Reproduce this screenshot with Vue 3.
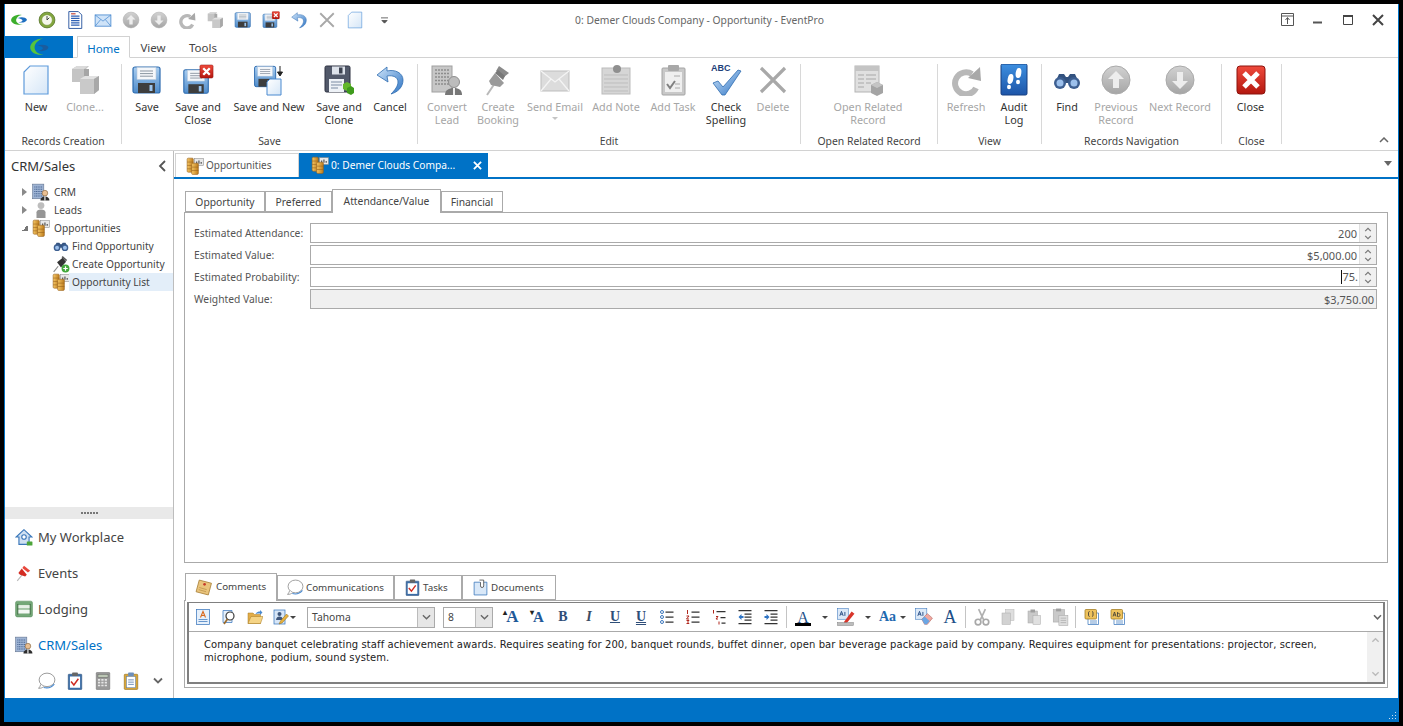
<template>
  <div class="win">
    <svg class="defs" width="0" height="0" aria-hidden="true">
      <defs>
        <linearGradient id="gPage" x1="0" y1="0" x2="1" y2="1"><stop offset="0" stop-color="#fff"/><stop offset="1" stop-color="#d5e6f7"/></linearGradient>
        <linearGradient id="gFloppy" x1="0" y1="0" x2="0" y2="1"><stop offset="0" stop-color="#a9cdf0"/><stop offset="1" stop-color="#4f8ccb"/></linearGradient>
        <linearGradient id="gGrey" x1="0" y1="0" x2="0" y2="1"><stop offset="0" stop-color="#d2d2d2"/><stop offset="1" stop-color="#a5a5a5"/></linearGradient>
        <linearGradient id="gRed" x1="0" y1="0" x2="0" y2="1"><stop offset="0" stop-color="#ef4a3c"/><stop offset="1" stop-color="#b3170f"/></linearGradient>
        <linearGradient id="gBlue" x1="0" y1="0" x2="0" y2="1"><stop offset="0" stop-color="#3d8fe0"/><stop offset="1" stop-color="#1d55a8"/></linearGradient>
        <linearGradient id="gGold" x1="0" y1="0" x2="1" y2="0"><stop offset="0" stop-color="#f6c765"/><stop offset="1" stop-color="#bb7a1c"/></linearGradient>
        <linearGradient id="gArrow" x1="0" y1="0" x2="1" y2="1"><stop offset="0" stop-color="#cfe5fa"/><stop offset="1" stop-color="#2e74c4"/></linearGradient>

        <symbol id="logo" viewBox="0 0 32 32">
          <path d="M21 7C9 6 2 11 2 17c1 6 12 9 21 7-8 0-13-4-12-9 1-4 5-7 10-8Z" fill="#3cae2c"/>
          <path d="M13 13c6-3 15-2 17 2 0 4-8 7-15 5 5 0 8-2 7-4-2-2-5-3-9-3Z" fill="#1e6fc0"/>
        </symbol>
        <symbol id="logoApp" viewBox="0 0 32 32">
          <path d="M23 2C10 3 1 10 2 18c1 7 11 12 21 10-9-1-15-6-14-13 1-6 7-11 14-13Z" fill="#56c43c"/>
          <path d="M13 14c6-3 15-2 18 2 0 5-9 8-16 6 5-1 8-3 7-5-2-2-5-3-9-3Z" fill="#1a5c9e"/>
        </symbol>
        <symbol id="clock" viewBox="0 0 32 32">
          <circle cx="16" cy="16" r="14" fill="#84a83e" stroke="#56762a" stroke-width="1.500"/>
          <circle cx="16" cy="16" r="9.500" fill="#f5f7ea" stroke="#6e8f33"/>
          <path d="M16 9v7l4-4" fill="none" stroke="#333" stroke-width="1.600"/>
        </symbol>
        <symbol id="doclist" viewBox="0 0 32 32">
          <path d="M5 1h17l6 6v24H5Z" fill="#fff" stroke="#23509c" stroke-width="1.600"/>
          <path d="M9 9h15M9 13h15M9 17h15M9 21h15M9 25h15" stroke="#2d5fb4" stroke-width="2"/>
          <path d="M9 5h8" stroke="#c03a2b" stroke-width="2"/>
        </symbol>
        <symbol id="mail" viewBox="0 0 32 32">
          <rect x="2" y="7" width="28" height="20" fill="#cfe3f8" stroke="#4a8ad0" stroke-width="1.500"/>
          <path d="M2 7l14 11L30 7M2 27l10-12M30 27 20 15" fill="none" stroke="#4a8ad0" stroke-width="1.300"/>
        </symbol>
        <symbol id="mailg" viewBox="0 0 32 32">
          <rect x="2" y="7" width="28" height="20" fill="#dcdcdc" stroke="#bdbdbd"/>
          <path d="M2 7l14 11L30 7M2 27l10-12M30 27 20 15" fill="none" stroke="#f4f4f4" stroke-width="1.300"/>
        </symbol>
        <symbol id="up" viewBox="0 0 32 32">
          <circle cx="16" cy="16" r="14" fill="url(#gGrey)" stroke="#aaa"/>
          <path d="M16 7l8 8h-5v9h-6v-9H8Z" fill="#ededed"/>
        </symbol>
        <symbol id="down" viewBox="0 0 32 32">
          <circle cx="16" cy="16" r="14" fill="url(#gGrey)" stroke="#aaa"/>
          <path d="M16 25l-8-8h5V8h6v9h5Z" fill="#ededed"/>
        </symbol>
        <symbol id="refresh" viewBox="0 0 32 32">
          <path d="M22 10A11 11 0 1 0 26 24" fill="none" stroke="#b8b8b8" stroke-width="6"/>
          <path d="M18 14l13 3-1-14Z" fill="#a8a8a8"/>
        </symbol>
        <symbol id="clone" viewBox="0 0 32 32">
          <path d="M3 5l5-3h12l-3 3v13H3Z" fill="#c4c4c4"/><path d="M3 5l5-3h11l-4 3Z" fill="#dadada"/><path d="M15 5h5v12l-5 3Z" fill="#a6a6a6"/>
          <path d="M11 15l5-3h14v14l-5 4H11Z" fill="#c9c9c9"/><path d="M11 15l5-3h14l-5 3Z" fill="#e2e2e2"/><path d="M25 15l5-3v14l-5 4Z" fill="#a8a8a8"/>
        </symbol>
        <symbol id="save" viewBox="0 0 32 32">
          <rect x="2" y="3" width="27" height="26" rx="2" fill="url(#gFloppy)" stroke="#2e6cb0" stroke-width="1.200"/>
          <rect x="6" y="3.500" width="19" height="12" fill="#f5f7fa" stroke="#b8c8da" stroke-width=".6"/>
          <path d="M9 7h13M9 9.600h13M9 12.200h13" stroke="#8b95a1" stroke-width="1"/>
          <rect x="7" y="19" width="17" height="10" fill="#3d3d3d"/>
          <rect x="18.500" y="21" width="3" height="6" fill="#9cc4ec"/>
        </symbol>
        <symbol id="redx" viewBox="0 0 32 32">
          <rect x="2" y="2" width="28" height="28" rx="3" fill="url(#gRed)" stroke="#8c120c"/>
          <path d="M9 9l14 14M23 9 9 23" stroke="#fff" stroke-width="5"/>
        </symbol>
        <symbol id="saveclose" viewBox="0 0 32 32">
          <svg x="0" y="3" width="29" height="29" viewBox="0 0 32 32"><use href="#save"/></svg>
          <svg x="17" y="0" width="15" height="15" viewBox="0 0 32 32"><use href="#redx"/></svg>
        </symbol>
        <symbol id="savenew" viewBox="0 0 32 32">
          <svg x="0" y="0" width="25" height="25" viewBox="0 0 32 32"><use href="#save"/></svg>
          <path d="M17 15h5l6 0v16H14V18Z" fill="url(#gPage)" stroke="#4a8ad0" stroke-width="1"/>
          <path d="M27 2v9M24.500 8l2.500 4 2.500-4Z" fill="#222" stroke="#222" stroke-width="1"/>
        </symbol>
        <symbol id="saveclone" viewBox="0 0 32 32">
          <rect x="2" y="2" width="25" height="26" rx="1.500" fill="#52596a" stroke="#2c3140"/>
          <rect x="9" y="2.500" width="13" height="8" fill="#dde2ea"/><rect x="16" y="3.500" width="3.500" height="6" fill="#3c4250"/>
          <rect x="6" y="15" width="15" height="13" fill="#eef2f7"/><path d="M8 18h11M8 21h11M8 24h7" stroke="#7a8ba3"/>
          <path d="M20 20l4-2 4 2v5l-4 2-4-2Z" fill="#63b82b"/><path d="M24 24l4-2 3 2v5l-3 2-4-2Z" fill="#3f9b1c"/>
        </symbol>
        <symbol id="undo" viewBox="0 0 32 32">
          <path d="M13 3 3 11l11 7-1-6c6-1 11 1 11 6 0 4-3 8-7 12 7-2 12-7 12-14C29 9 21 5 13 7Z" fill="url(#gArrow)" stroke="#2e6cb0" stroke-width=".8"/>
        </symbol>
        <symbol id="xg" viewBox="0 0 32 32"><path d="M4 4l24 24M28 4 4 28" stroke="#a8a8a8" stroke-width="3.200"/></symbol>
        <symbol id="page" viewBox="0 0 32 32">
          <path d="M10 2h18v28H4V8Z" fill="url(#gPage)" stroke="#5f9bdb" stroke-width="1.200"/>
        </symbol>
        <symbol id="lead" viewBox="0 0 32 32">
          <rect x="1" y="2" width="20" height="26" fill="#c7c7c7" stroke="#a0a0a0"/>
          <path d="M4 6h14M4 9.500h14M4 13h14M4 16.500h14M4 20h14" stroke="#8d8d8d" stroke-width="1.600" stroke-dasharray="2 1"/>
          <circle cx="23" cy="18" r="5.500" fill="#bcbcbc" stroke="#8f8f8f"/>
          <path d="M14 31c0-5 4-7 9-7s8 2 8 7Z" fill="#777"/><path d="M22 24h2l0 7h-2Z" fill="#eee"/>
        </symbol>
        <symbol id="pin" viewBox="0 0 32 32">
          <path d="M5 31l8-12" stroke="#b9b9b9" stroke-width="2"/>
          <path d="M13 9l9 10-4 4-9-2-2-4Z" fill="#9a9a9a"/><path d="M17 2l10 7-5 4-8-6Z" fill="#8a8a8a"/><path d="M13 9l8 7 2-4-7-6Z" fill="#787878"/>
        </symbol>
        <symbol id="note" viewBox="0 0 32 32">
          <rect x="2" y="4" width="28" height="26" fill="#d6d6d6" stroke="#bbb"/>
          <path d="M4 11h24M4 15h24M4 19h24M4 23h24M4 27h24" stroke="#bdbdbd"/>
          <circle cx="17" cy="5" r="4" fill="#8f8f8f"/>
        </symbol>
        <symbol id="task" viewBox="0 0 32 32">
          <rect x="5" y="4" width="23" height="27" rx="1" fill="#c8c8c8" stroke="#a4a4a4"/>
          <rect x="8" y="8" width="17" height="20" fill="#efefef"/>
          <rect x="11" y="1" width="11" height="6" rx="1" fill="#a8a8a8"/>
          <path d="M10 20l3 4 5-7" fill="none" stroke="#808080" stroke-width="2"/><path d="M17 12h6M18 20h5M18 24h5" stroke="#aaa"/>
        </symbol>
        <symbol id="abc" viewBox="0 0 32 32">
          <path d="M3 19l5-2 5 6L28 6l3 1-16 24h-3Z" fill="url(#gArrow)" stroke="#2e6cb0" stroke-width=".8"/>
        </symbol>
        <symbol id="related" viewBox="0 0 32 32">
          <rect x="3" y="2" width="24" height="26" fill="#e0e0e0" stroke="#b4b4b4"/>
          <rect x="3" y="2" width="24" height="5" fill="#c4c4c4"/>
          <path d="M6 11h6M14 11h10M6 15h6M14 15h10M6 19h6M14 19h5M6 23h6" stroke="#a8a8a8"/>
          <path d="M19 21l6-3 6 3v8l-6 3-6-3Z" fill="#a4a4a4"/><path d="M19 21l6 3 6-3-6-3Z" fill="#c4c4c4"/>
        </symbol>
        <symbol id="audit" viewBox="0 0 32 32">
          <rect x="3" y="0" width="26" height="31" rx="1.500" fill="url(#gBlue)" stroke="#173f80"/>
          <ellipse cx="12.500" cy="15" rx="2.800" ry="5" fill="#fff" transform="rotate(12 12.500 15)"/>
          <ellipse cx="11" cy="23" rx="2" ry="2.200" fill="#fff"/>
          <ellipse cx="20.500" cy="9" rx="2.800" ry="5" fill="#fff" transform="rotate(8 20.500 9)"/>
          <ellipse cx="20" cy="18" rx="2" ry="2.200" fill="#fff"/>
        </symbol>
        <symbol id="find" viewBox="0 0 32 32">
          <path d="M8 10h5l2 3h2l2-3h5l4 9H4Z" fill="#33527f"/>
          <circle cx="9" cy="19" r="6" fill="#3d5f91"/><circle cx="23" cy="19" r="6" fill="#3d5f91"/>
          <circle cx="9" cy="19" r="3.500" fill="#9cc0ec"/><circle cx="23" cy="19" r="3.500" fill="#9cc0ec"/>
        </symbol>
        <symbol id="opp" viewBox="0 0 32 32">
          <rect x="15" y="3" width="16" height="12" fill="#e8e8e8" stroke="#8a8a8a"/>
          <path d="M19 12V8M23 12V6M27 12V9" stroke="#4a4a4a" stroke-width="2"/>
          <rect x="2" y="2" width="11" height="25" rx="2" fill="url(#gGold)" stroke="#96601a"/>
          <rect x="10" y="11" width="12" height="20" rx="2" fill="url(#gGold)" stroke="#96601a"/>
          <path d="M2 9h11M2 15h8M2 21h8M10 18h12M10 24h12" stroke="#96601a"/>
        </symbol>
        <symbol id="person" viewBox="0 0 32 32">
          <circle cx="16" cy="8" r="6" fill="#bdbdbd"/><path d="M8 30V20c0-3 3-5 8-5s8 2 8 5v10Z" fill="#969696"/>
        </symbol>
        <symbol id="crm" viewBox="0 0 32 32">
          <rect x="1" y="2" width="20" height="26" fill="#9fb4d4" stroke="#5e708c"/>
          <path d="M4 7h14M4 11h14M4 15h14M4 19h14M4 23h14" stroke="#4e6a96" stroke-width="1.800" stroke-dasharray="2 1"/>
          <circle cx="23" cy="18" r="5" fill="#e9bf92" stroke="#7a5a34"/>
          <path d="M15 31c0-4 3-7 8-7s8 3 8 7Z" fill="#2d2d2d"/><path d="M22 24h2v7h-2Z" fill="#fff"/>
        </symbol>
        <symbol id="create" viewBox="0 0 32 32">
          <path d="M3 30l8-10" stroke="#888" stroke-width="2"/>
          <path d="M9 13l10-8 6 7-9 10Z" fill="#343434"/><path d="M18 3l8 7" stroke="#555" stroke-width="3"/>
          <circle cx="24" cy="24" r="7" fill="#42a83a"/><path d="M24 20v8M20 24h8" stroke="#fff" stroke-width="2.200"/>
        </symbol>
        <symbol id="home" viewBox="0 0 32 32">
          <path d="M16 3 2 16h5v13h18V16h5Z" fill="#cfe0f2" stroke="#3a77ba" stroke-width="2"/>
          <circle cx="16" cy="16" r="4" fill="#fff" stroke="#3a77ba" stroke-width="2"/>
          <rect x="21" y="24" width="10" height="7" rx="1" fill="#4da53a"/>
        </symbol>
        <symbol id="pinred" viewBox="0 0 32 32">
          <path d="M4 30l9-11" stroke="#bbb" stroke-width="2"/>
          <path d="M12 8l9 11-3 3-9-3-3-3Z" fill="#d32c22"/><path d="M16 3l11 9-4 3-10-8Z" fill="#e8473c"/>
        </symbol>
        <symbol id="bed" viewBox="0 0 32 32">
          <rect x="1" y="2" width="30" height="28" rx="3" fill="#74a878" stroke="#5b8e60"/>
          <rect x="5" y="9" width="22" height="6" fill="#e6f0e6"/><rect x="5" y="17" width="22" height="7" fill="#f3f8f3"/>
          <path d="M5 7v19M27 7v19" stroke="#35613a" stroke-width="1.600"/>
        </symbol>
        <symbol id="bubble" viewBox="0 0 32 32">
          <ellipse cx="16" cy="14" rx="14" ry="12" fill="#fff" stroke="#8a8a8a" stroke-width="1.500"/>
          <path d="M5 22c-1 3-2 5-4 7 4 0 7-1 9-3" fill="#fff" stroke="#8a8a8a" stroke-width="1.500"/>
          <path d="M10 27.500c7 2 14 0 19-6" fill="none" stroke="#4a8ad0" stroke-width="2"/>
        </symbol>
        <symbol id="clipred" viewBox="0 0 32 32">
          <rect x="4" y="4" width="24" height="27" rx="1" fill="#3d6fa9" stroke="#284c78"/>
          <rect x="7" y="8" width="18" height="20" fill="#fff"/>
          <rect x="11" y="1" width="10" height="6" rx="1" fill="#666"/>
          <path d="M9 17l5 6 8-11" fill="none" stroke="#cf2a20" stroke-width="2.600"/>
        </symbol>
        <symbol id="calc" viewBox="0 0 32 32">
          <rect x="4" y="1" width="24" height="30" rx="1" fill="#9a9a9a" stroke="#6e6e6e"/>
          <rect x="7" y="4" width="18" height="6" fill="#bcc7b5" stroke="#666"/>
          <path d="M7 14h18M7 19h18M7 24h18" stroke="#e6e6e6" stroke-width="3" stroke-dasharray="4 2"/>
        </symbol>
        <symbol id="clipgold" viewBox="0 0 32 32">
          <rect x="4" y="4" width="24" height="27" rx="1.500" fill="#d9a637" stroke="#8c6712"/>
          <rect x="8" y="8" width="16" height="20" fill="#fff" stroke="#5a7fb0"/>
          <rect x="11" y="1" width="10" height="6" rx="1" fill="#6d8fbb"/>
          <path d="M11 14h10M11 18h10M11 22h10" stroke="#5a7fb0" stroke-width="1.500"/>
        </symbol>
        <symbol id="comment" viewBox="0 0 32 32">
          <path d="M8 2 31 8l-6 22L2 24Z" fill="#eac47c" stroke="#a57c33" stroke-width="1.500"/>
          <circle cx="18" cy="10" r="2.500" fill="#c63a2c"/><path d="M8 16l14 4M7 20l14 4" stroke="#a57c33"/>
        </symbol>
        <symbol id="docclip" viewBox="0 0 32 32">
          <path d="M4 6h24v24H4Z" fill="#d9e8f8" stroke="#3c78bd" stroke-width="1.500"/>
          <path d="M14 2h8v11a3 3 0 0 1-6 0V6" fill="#fff" stroke="#444" stroke-width="1.500"/>
        </symbol>
        <symbol id="t-a" viewBox="0 0 32 32">
          <rect x="3" y="1" width="26" height="30" fill="#e6f0fb" stroke="#3c78bd" stroke-width="1.500"/>
          <path d="M11 17 16 5l5 12M13 13h6" fill="none" stroke="#d9681c" stroke-width="2.200"/><path d="M7 21h18M7 25h18" stroke="#3c78bd" stroke-width="1.500"/>
        </symbol>
        <symbol id="t-find" viewBox="0 0 32 32">
          <path d="M4 3h18v24H4Z" fill="#e6f0fb" stroke="#3c78bd" stroke-width="1.500"/>
          <circle cx="18" cy="14" r="8" fill="#fff" stroke="#3b3b3b" stroke-width="2.400"/><path d="M13 20 6 30" stroke="#9a6a2c" stroke-width="3.500"/>
        </symbol>
        <symbol id="t-open" viewBox="0 0 32 32">
          <path d="M2 8h10l3 3h12v18H2Z" fill="#e2ad48" stroke="#a67a24"/>
          <path d="M2 29 8 15h24l-5 14Z" fill="#f5d486" stroke="#a67a24"/>
          <path d="M17 10c2-4 6-5 9-5V2l5 5-5 5V9c-3 0-6 0-9 1Z" fill="#4a8ad0"/>
        </symbol>
        <symbol id="t-sig" viewBox="0 0 32 32">
          <rect x="2" y="2" width="22" height="28" fill="#d7e6f7" stroke="#3c78bd" stroke-width="1.500"/>
          <circle cx="13" cy="10" r="4" fill="#3f577c"/><path d="M6 22c0-5 4-7 7-7s7 2 7 7Z" fill="#3f577c"/>
          <path d="M12 30l3-6L27 10l4 4-13 14Z" fill="#e9b33f" stroke="#8c6712"/>
        </symbol>
        <symbol id="t-bul" viewBox="0 0 32 32"><g fill="none" stroke="#3c78bd" stroke-width="2"><circle cx="6" cy="6" r="3"/><circle cx="6" cy="16" r="3"/><circle cx="6" cy="26" r="3"/></g><path d="M13 6h16M13 16h16M13 26h16" stroke="#333" stroke-width="2.500"/></symbol>
        <symbol id="t-num" viewBox="0 0 32 32"><path d="M5 2v8M3 14h5l-5 6h5M3 23h5l-3 3 3 3H3" fill="none" stroke="#b0271d" stroke-width="2"/><path d="M13 6h16M13 16h16M13 26h16" stroke="#333" stroke-width="2.500"/></symbol>
        <symbol id="t-multi" viewBox="0 0 32 32"><path d="M5 2v7M10 15h4l-4 5h4M16 25v6" fill="none" stroke="#b0271d" stroke-width="2"/><path d="M11 5h18M19 17h10M21 28h8" stroke="#333" stroke-width="2.500"/></symbol>
        <symbol id="t-out" viewBox="0 0 32 32"><path d="M3 3h26M15 10h14M15 16h14M15 22h14M3 29h26" stroke="#333" stroke-width="2.500"/><path d="M3 16l6-6v4h4v4H9v4Z" fill="#2e74c4"/></symbol>
        <symbol id="t-in" viewBox="0 0 32 32"><path d="M3 3h26M15 10h14M15 16h14M15 22h14M3 29h26" stroke="#333" stroke-width="2.500"/><path d="M13 16l-6-6v4H3v4h4v4Z" fill="#2e74c4"/></symbol>
        <symbol id="t-high" viewBox="0 0 32 32">
          <rect x="1" y="1" width="19" height="19" fill="#dce9f8" stroke="#3c78bd"/>
          <path d="M5 14l3-8 3 8M6 11h4M14 7v7" fill="none" stroke="#2a4f85" stroke-width="1.700"/>
          <path d="M13 24 26 6l5 4-14 17-5 1Z" fill="#d8352a"/><rect x="1" y="26" width="28" height="5" fill="#bcbcbc" stroke="#888"/>
        </symbol>
        <symbol id="t-clear" viewBox="0 0 32 32">
          <rect x="1" y="1" width="20" height="19" fill="#dce9f8" stroke="#3c78bd"/>
          <path d="M5 14l3-8 3 8M6 11h4M14 7v7" fill="none" stroke="#2a4f85" stroke-width="1.700"/>
          <path d="M12 20l10-10 9 8-9 11h-5Z" fill="#f0a7a0" stroke="#b0605a"/><path d="M12 20l5-5 9 8-5 6h-4Z" fill="#6aa6e4"/>
        </symbol>
        <symbol id="t-cut" viewBox="0 0 32 32">
          <path d="M10 2l9 19M22 2 13 21" stroke="#b0b0b0" stroke-width="3"/>
          <circle cx="9" cy="25" r="5" fill="none" stroke="#a8a8a8" stroke-width="3"/><circle cx="23" cy="25" r="5" fill="none" stroke="#a8a8a8" stroke-width="3"/>
        </symbol>
        <symbol id="t-copy" viewBox="0 0 32 32"><rect x="11" y="1" width="17" height="22" fill="#dedede" stroke="#b5b5b5"/><rect x="4" y="8" width="17" height="23" fill="#d2d2d2" stroke="#adadad"/></symbol>
        <symbol id="t-paste" viewBox="0 0 32 32"><rect x="4" y="4" width="19" height="24" fill="#c9c9c9" stroke="#a8a8a8"/><rect x="9" y="1" width="9" height="6" fill="#9f9f9f"/><rect x="14" y="13" width="15" height="18" fill="#e0e0e0" stroke="#ababab"/></symbol>
        <symbol id="t-spec" viewBox="0 0 32 32"><rect x="4" y="3" width="20" height="22" fill="#c9c9c9" stroke="#a8a8a8"/><rect x="9" y="1" width="9" height="5" fill="#9f9f9f"/><rect x="14" y="13" width="16" height="18" fill="#dedede" stroke="#a8a8a8"/><path d="M17 18h10M17 22h10M17 26h10" stroke="#999"/></symbol>
        <symbol id="t-ph1" viewBox="0 0 32 32"><path d="M8 8h21v23H8Z" fill="#fff" stroke="#3c78bd" stroke-width="1.500"/><path d="M12 24h14M12 28h14" stroke="#3c78bd" stroke-width="1.500"/><rect x="2" y="1" width="23" height="19" rx="2" fill="#eec25c" stroke="#9f7a1f" stroke-width="1.500"/><path d="M11 5c-2 0-2 2-2 5s0 5 2 5M16 5c2 0 2 2 2 5s0 5-2 5" fill="none" stroke="#333" stroke-width="1.600"/></symbol>
        <symbol id="t-ph2" viewBox="0 0 32 32"><path d="M8 8h21v23H8Z" fill="#fff" stroke="#3c78bd" stroke-width="1.500"/><path d="M12 24h14M12 28h14" stroke="#3c78bd" stroke-width="1.500"/><rect x="2" y="1" width="23" height="19" rx="2" fill="#eec25c" stroke="#9f7a1f" stroke-width="1.500"/><path d="M6 15l3-9 3 9M7 12h4M15 6v9c3 1 5 0 5-3s-2-4-5-3" fill="none" stroke="#333" stroke-width="1.500"/></symbol>
      </defs>
    </svg>

    <header class="titlebar">
      <div class="qat">
        <span v-for="q in qat" :key="q" class="qitem"><svg class="i18"><use :href="'#' + q" /></svg></span>
        <span class="qitem"><svg class="qmore" viewBox="0 0 8 8"><path d="M0 1h8M1 4h6l-3 3Z" stroke="#555" fill="#555" /></svg></span>
      </div>
      <div class="title">0: Demer Clouds Company - Opportunity - EventPro</div>
      <div class="winbtns">
        <svg class="wb" viewBox="0 0 14 14"><path d="M.5.500h12v12H.5ZM1 3h11M6.500 11V5M4.500 7l2-2.500 2 2.500" fill="none" stroke="#555" /></svg>
        <svg class="wb" viewBox="0 0 14 14"><path d="M2 9.500h9" stroke="#555" stroke-width="2" /></svg>
        <svg class="wb" viewBox="0 0 14 14"><path d="M2.500 2.500h9v9h-9Z" fill="none" stroke="#444" /><path d="M2 3h10" stroke="#444" stroke-width="2" /></svg>
        <svg class="wb" viewBox="0 0 14 14"><path d="M2 2l10 10M12 2 2 12" stroke="#444" stroke-width="2" /></svg>
      </div>
    </header>

    <nav class="rtabs">
      <div class="appbtn"><svg class="logoA"><use href="#logoApp" /></svg></div>
      <div class="rtab active">Home</div>
      <div class="rtab view">View</div>
      <div class="rtab tools">Tools</div>
    </nav>

    <section class="ribbon">
      <div v-for="g in groups" :key="g.name" class="rgroup" :style="{ width: g.w + 'px', paddingLeft: g.pl + 'px' }">
        <div class="rbtns">
          <div v-for="b in g.items" :key="b.t" class="rbtn" :class="{ off: b.off }" :style="{ width: b.w + 'px' }">
            <div class="ricon">
              <svg class="i32"><use :href="'#' + b.i" /></svg>
              <span v-if="b.i === 'abc'" class="abc">ABC</span>
            </div>
            <div class="rlabel">{{ b.t }}<br v-if="b.t2" />{{ b.t2 }}</div>
            <div v-if="b.dd" class="ddarrow"></div>
          </div>
        </div>
        <div class="glabel">{{ g.name }}</div>
      </div>
      <svg class="collapse" viewBox="0 0 10 6"><path d="M1 5l4-4 4 4" fill="none" stroke="#666" stroke-width="1.500" /></svg>
    </section>

    <div class="body">
      <aside class="side">
        <div class="shead"><span>CRM/Sales</span><svg class="sback" viewBox="0 0 8 12"><path d="M7 1 2 6l5 5" fill="none" stroke="#555" stroke-width="1.800" /></svg></div>
        <div class="tree">
          <div v-for="r in tree" :key="r.t" class="trow" :class="{ child: r.child, sel: r.sel }">
            <span class="tarrow" :class="r.arrow"></span>
            <svg class="i18"><use :href="'#' + r.i" /></svg>
            <span class="ttext">{{ r.t }}</span>
          </div>
        </div>
        <div class="split">
          <span v-for="n in 6" :key="n" class="dot"></span>
        </div>
        <div v-for="n in nav" :key="n.t" class="navitem" :class="{ cur: n.cur }">
          <svg class="i18"><use :href="'#' + n.i" /></svg><span>{{ n.t }}</span>
        </div>
        <div class="navfoot">
          <svg v-for="i in ['bubble', 'clipred', 'calc', 'clipgold']" :key="i" class="i18"><use :href="'#' + i" /></svg>
          <svg class="navmore" viewBox="0 0 10 8"><path d="M1 1.500l4 4 4-4" fill="none" stroke="#666" stroke-width="1.800" /></svg>
        </div>
      </aside>

      <main class="main">
        <div class="dtabs">
          <div class="dtab"><svg class="i18"><use href="#opp" /></svg><span>Opportunities</span></div>
          <div class="dtab on"><svg class="i18"><use href="#opp" /></svg><span>0: Demer Clouds Compa...</span><svg class="dclose" viewBox="0 0 10 10"><path d="M1 1l8 8M9 1 1 9" stroke="#fff" stroke-width="2" /></svg></div>
          <svg class="dmore" viewBox="0 0 8 5"><path d="M0 0h8L4 5Z" fill="#666" /></svg>
        </div>
        <div class="doc">
          <div class="ftabs">
            <div v-for="t in formTabs" :key="t.t" class="ftab" :class="{ on: t.on }" :style="{ width: t.w + 'px' }">{{ t.t }}</div>
          </div>
          <div class="fpanel">
            <div v-for="f in fields" :key="f.l" class="frow">
              <label class="flabel">{{ f.l }}</label>
              <div class="finput" :class="{ ro: f.ro }">
                <span class="fval" :class="{ caret: f.caret }">{{ f.v }}</span>
                <div v-if="!f.ro" class="spin">
                  <svg viewBox="0 0 10 6"><path d="M1.500 5 5 1.500 8.500 5" fill="none" stroke="#777" stroke-width="1.500" /></svg>
                  <svg viewBox="0 0 10 6"><path d="M1.500 1 5 4.500 8.500 1" fill="none" stroke="#777" stroke-width="1.500" /></svg>
                </div>
              </div>
            </div>
          </div>
          <div class="ctabs">
            <div v-for="t in commentTabs" :key="t.t" class="ctab" :class="{ on: t.on }" :style="{ width: t.w + 'px' }">
              <svg class="i18"><use :href="'#' + t.i" /></svg><span>{{ t.t }}</span>
            </div>
          </div>
          <div class="cpanel">
            <div class="cinner">
              <div class="tbar">
                <span class="ti"><svg class="i16"><use href="#t-a" /></svg></span>
                <span class="ti"><svg class="i16"><use href="#t-find" /></svg></span>
                <span class="ti"><svg class="i16"><use href="#t-open" /></svg></span>
                <span class="ti"><svg class="i16"><use href="#t-sig" /></svg><i class="caretdn sig"></i></span>
                <div class="combo font"><span>Tahoma</span><b><svg viewBox="0 0 10 6"><path d="M1 1l4 4 4-4" fill="none" stroke="#666" stroke-width="1.500" /></svg></b></div>
                <div class="combo size"><span>8</span><b><svg viewBox="0 0 10 6"><path d="M1 1l4 4 4-4" fill="none" stroke="#666" stroke-width="1.500" /></svg></b></div>
                <span class="ti t-txt big"><sup>▴</sup>A</span>
                <span class="ti t-txt med"><sup>▾</sup>A</span>
                <span class="ti t-txt">B</span>
                <span class="ti t-txt it">I</span>
                <span class="ti t-txt un">U</span>
                <span class="ti t-txt un dbl">U</span>
                <span class="ti"><svg class="i16"><use href="#t-bul" /></svg></span>
                <span class="ti"><svg class="i16"><use href="#t-num" /></svg></span>
                <span class="ti"><svg class="i16"><use href="#t-multi" /></svg></span>
                <span class="ti"><svg class="i16"><use href="#t-out" /></svg></span>
                <span class="ti"><svg class="i16"><use href="#t-in" /></svg></span>
                <i class="tsep s1"></i>
                <span class="ti t-txt fc">A</span>
                <span class="arrowcell"><i class="caretdn"></i></span>
                <span class="ti"><svg class="i18"><use href="#t-high" /></svg></span>
                <span class="arrowcell"><i class="caretdn"></i></span>
                <span class="ti t-txt aa">Aa</span>
                <span class="arrowcell nar"><i class="caretdn"></i></span>
                <span class="ti gapl"><svg class="i18"><use href="#t-clear" /></svg></span>
                <span class="ti t-txt bigA">A</span>
                <i class="tsep"></i>
                <span class="ti"><svg class="i18"><use href="#t-cut" /></svg></span>
                <span class="ti"><svg class="i16"><use href="#t-copy" /></svg></span>
                <span class="ti"><svg class="i16"><use href="#t-paste" /></svg></span>
                <span class="ti"><svg class="i18"><use href="#t-spec" /></svg></span>
                <i class="tsep"></i>
                <span class="ti"><svg class="i16"><use href="#t-ph1" /></svg></span>
                <span class="ti"><svg class="i16"><use href="#t-ph2" /></svg></span>
                <svg class="tmore" viewBox="0 0 10 8"><path d="M1 1.500l4 4 4-4" fill="none" stroke="#666" stroke-width="1.800" /></svg>
              </div>
              <div class="editor">
                <div class="etext">Company banquet celebrating staff achievement awards. Requires seating for 200, banquet rounds, buffet dinner, open bar beverage package paid by company. Requires equipment for presentations: projector, screen,<br />microphone, podium, sound system.</div>
                <div class="escroll">
                  <svg viewBox="0 0 10 6"><path d="M1.500 5 5 1.500 8.500 5" fill="none" stroke="#bbb" stroke-width="1.500" /></svg>
                  <svg viewBox="0 0 10 6"><path d="M1.500 1 5 4.500 8.500 1" fill="none" stroke="#bbb" stroke-width="1.500" /></svg>
                </div>
              </div>
            </div>
          </div>
        </div>
      </main>
    </div>

    <footer class="status">
      <svg class="grip" viewBox="0 0 9 9"><path d="M7 1h1v1H7ZM4 4h1v1H4ZM7 4h1v1H7ZM1 7h1v1H1ZM4 7h1v1H4ZM7 7h1v1H7Z" fill="#cfe0f2" /></svg>
    </footer>
  </div>
</template>

<script setup>
const qat = ['logo', 'clock', 'doclist', 'mail', 'up', 'down', 'refresh', 'clone', 'save', 'saveclose', 'undo', 'xg', 'page']

const groups = [
  { name: 'Records Creation', w: 117, pl: 9, items: [
    { t: 'New', i: 'page', w: 44 },
    { t: 'Clone...', i: 'clone', w: 54, off: true },
  ] },
  { name: 'Save', w: 296, pl: 6, items: [
    { t: 'Save', i: 'save', w: 38 },
    { t: 'Save and', t2: 'Close', i: 'saveclose', w: 64 },
    { t: 'Save and New', i: 'savenew', w: 78 },
    { t: 'Save and', t2: 'Clone', i: 'saveclone', w: 62 },
    { t: 'Cancel', i: 'undo', w: 40 },
  ] },
  { name: 'Edit', w: 383, pl: 5, items: [
    { t: 'Convert', t2: 'Lead', i: 'lead', w: 48, off: true },
    { t: 'Create', t2: 'Booking', i: 'pin', w: 54, off: true },
    { t: 'Send Email', i: 'mailg', w: 60, off: true, dd: true },
    { t: 'Add Note', i: 'note', w: 62, off: true },
    { t: 'Add Task', i: 'task', w: 52, off: true },
    { t: 'Check', t2: 'Spelling', i: 'abc', w: 54 },
    { t: 'Delete', i: 'xg', w: 40, off: true },
  ] },
  { name: 'Open Related Record', w: 137, pl: 0, items: [
    { t: 'Open Related', t2: 'Record', i: 'related', w: 134, off: true },
  ] },
  { name: 'View', w: 104, pl: 4, items: [
    { t: 'Refresh', i: 'refresh', w: 48, off: true },
    { t: 'Audit', t2: 'Log', i: 'audit', w: 48 },
  ] },
  { name: 'Records Navigation', w: 180, pl: 5, items: [
    { t: 'Find', i: 'find', w: 40 },
    { t: 'Previous', t2: 'Record', i: 'up', w: 58, off: true },
    { t: 'Next Record', i: 'down', w: 70, off: true },
  ] },
  { name: 'Close', w: 60, pl: 0, items: [
    { t: 'Close', i: 'redx', w: 57 },
  ] },
]

const tree = [
  { t: 'CRM', i: 'crm', arrow: 'closed' },
  { t: 'Leads', i: 'person', arrow: 'closed' },
  { t: 'Opportunities', i: 'opp', arrow: 'open' },
  { t: 'Find Opportunity', i: 'find', child: true },
  { t: 'Create Opportunity', i: 'create', child: true },
  { t: 'Opportunity List', i: 'opp', child: true, sel: true },
]

const nav = [
  { t: 'My Workplace', i: 'home' },
  { t: 'Events', i: 'pinred' },
  { t: 'Lodging', i: 'bed' },
  { t: 'CRM/Sales', i: 'crm', cur: true },
]

const formTabs = [
  { t: 'Opportunity', w: 80 },
  { t: 'Preferred', w: 67 },
  { t: 'Attendance/Value', w: 109, on: true },
  { t: 'Financial', w: 62 },
]

const fields = [
  { l: 'Estimated Attendance:', v: '200' },
  { l: 'Estimated Value:', v: '$5,000.00' },
  { l: 'Estimated Probability:', v: '75.', caret: true },
  { l: 'Weighted Value:', v: '$3,750.00', ro: true },
]

const commentTabs = [
  { t: 'Comments', i: 'comment', w: 92, on: true },
  { t: 'Communications', i: 'bubble', w: 117 },
  { t: 'Tasks', i: 'clipred', w: 68 },
  { t: 'Documents', i: 'docclip', w: 94 },
]
</script>

<style>
html, body { margin: 0; background: #000; }
</style>

<style scoped>
.win {
  position: relative;
  margin: 4px 0 0 4px;
  width: 1395px;
  height: 718px;
  box-sizing: border-box;
  border-left: 1px solid #0072c6;
  border-right: 1px solid #0072c6;
  background: #fff;
  display: flex;
  flex-direction: column;
  font-family: "Noto Sans", "Open Sans", sans-serif;
  font-size: 11px;
  color: #3b3b3b;
  overflow: hidden;
}
.defs { position: absolute; }
.i32 { width: 32px; height: 32px; display: block; }
.i18 { width: 18px; height: 18px; display: block; flex: none; }
.i16 { width: 16px; height: 16px; display: block; flex: none; }

.titlebar { height: 32px; flex: none; display: flex; align-items: center; position: relative; }
.qat { display: flex; }
.qitem { width: 28px; display: flex; justify-content: center; align-items: center; }
.qmore { width: 7px; height: 7px; margin-left: 3px; }
.title { position: absolute; left: 0; right: 0; padding-right: 4px; padding-bottom: 1px; text-align: center; color: #666; font-size: 10.3px; }
.winbtns { margin-left: auto; display: flex; align-items: center; gap: 16px; padding-right: 13px; }
.wb { width: 14px; height: 14px; }

.rtabs { height: 22px; flex: none; display: flex; box-sizing: border-box; border-bottom: 1px solid #d2d2d2; }
.appbtn { width: 68px; height: 22px; background: #0072c6; display: flex; justify-content: center; align-items: center; flex: none; }
.logoA { width: 22px; height: 20px; }
.rtab { font-size: 11.5px; color: #444; height: 22px; line-height: 24px; text-align: center; box-sizing: border-box; }
.rtab.active { margin-left: 4px; width: 53px; border: 1px solid #d2d2d2; border-bottom: 1px solid #fff; color: #0072c6; }
.rtab.view { width: 46px; }
.rtab.tools { width: 54px; }

.ribbon { height: 93px; flex: none; box-sizing: border-box; border-bottom: 1px solid #d2d2d2; display: flex; }
.rgroup { height: 80px; margin-top: 6px; box-sizing: border-box; border-right: 1px solid #d8d8d8; display: flex; flex-direction: column; position: relative; flex: none; }
.rbtns { display: flex; flex: 1; }
.rbtn { flex: none; display: flex; flex-direction: column; align-items: center; color: #333; }
.rbtn.off { color: #a6a6a6; }
.ricon { height: 32px; position: relative; }
.abc { position: absolute; left: 1px; top: -1px; font: bold 9px "Liberation Sans", sans-serif; color: #1e3f7a; }
.rlabel { margin-top: 4px; font-size: 10.8px; line-height: 13px; text-align: center; white-space: nowrap; }
.ddarrow { width: 0; height: 0; margin-top: 4px; border-left: 3px solid transparent; border-right: 3px solid transparent; border-top: 3px solid #c4c4c4; }
.glabel { position: absolute; left: 0; right: 0; bottom: -4px; height: 14px; line-height: 14px; text-align: center; font-size: 10.4px; color: #444; white-space: nowrap; }
.collapse { width: 10px; height: 6px; margin: 79px 0 0 auto; margin-right: 9px; }

.body { flex: 1; min-height: 0; display: flex; }
.side { width: 169px; flex: none; box-sizing: border-box; border-right: 1px solid #bdbdbd; display: flex; flex-direction: column; }
.shead { height: 30px; flex: none; padding: 0 7px 0 6px; box-sizing: border-box; display: flex; align-items: center; justify-content: space-between; font-size: 13px; color: #333; }
.shead span { padding-bottom: 1px; }
.sback { width: 8px; height: 12px; }
.tree { flex: 1; padding-top: 2px; }
.trow { height: 18px; display: flex; align-items: center; padding-left: 17px; color: #444; font-size: 10.2px; position: relative; }
.tarrow { width: 0; height: 0; margin-right: 5px; flex: none; border: 4px solid transparent; border-right-width: 0; border-left: 5px solid #8a8a8a; box-sizing: content-box; }
.tarrow.open { width: 6px; height: 6px; border: 0; background: linear-gradient(135deg, transparent 50%, #777 50%); margin-right: 4px; }
.ttext { margin-left: 4px; padding-bottom: 1px; }
.trow.child { padding-left: 47px; }
.trow.child .tarrow { display: none; }
.trow.child .ttext { margin-left: -1px; padding: 0 0 0 3px; height: 18px; line-height: 18px; flex: 1; box-sizing: border-box; }
.trow.sel .ttext { background: #e3eef9; }
.split { height: 12px; flex: none; background: #e9e9e9; display: flex; align-items: center; justify-content: center; gap: 1px; }
.dot { width: 2px; height: 2px; background: #777; }
.navitem { height: 36px; flex: none; box-sizing: border-box; display: flex; align-items: center; padding-left: 10px; gap: 5px; font-size: 13px; color: #444; }
.navitem span { padding-bottom: 1px; }
.navitem.cur { color: #0072c6; }
.navfoot { height: 35px; flex: none; display: flex; align-items: center; padding-left: 33px; gap: 10px; }
.navmore { width: 10px; height: 8px; margin-left: 3px; }

.main { flex: 1; min-width: 0; display: flex; flex-direction: column; }
.dtabs { height: 28px; flex: none; box-sizing: border-box; border-bottom: 2px solid #0072c6; padding: 2px 0 0 1px; display: flex; position: relative; }
.dtab { width: 124px; height: 24px; box-sizing: border-box; border: 1px solid #d2d2d2; border-bottom: 0; display: flex; align-items: center; padding-left: 10px; gap: 2px; color: #555; font-size: 10px; }
.dtab span { padding-bottom: 1px; }
.dtab.on { width: 189px; background: #0072c6; border: 0; color: #fff; padding-left: 12px; font-size: 10.2px; }
.dtab.on span { width: 136px; white-space: nowrap; }
.dclose { width: 9px; height: 9px; margin-left: 4px; }
.dmore { width: 8px; height: 5px; margin: 8px 6px 0 auto; }

.doc { flex: 1; min-height: 0; box-sizing: border-box; padding: 10px; display: flex; flex-direction: column; }
.ftabs { height: 23px; flex: none; display: flex; padding-left: 1px; position: relative; z-index: 1; }
.ftab { height: 21px; margin-top: 2px; box-sizing: border-box; border: 1px solid #aaa; line-height: 20px; text-align: center; background: #fff; color: #444; font-size: 10.3px; }
.ftab.on { height: 24px; margin-top: 0; border-bottom: 0; line-height: 22px; }
.fpanel { flex: 1; min-height: 0; box-sizing: border-box; border: 1px solid #aaa; padding: 10px 10px 0 9px; }
.frow { height: 20px; margin-bottom: 2px; display: flex; align-items: center; }
.flabel { width: 116px; flex: none; color: #555; font-size: 10.3px; white-space: nowrap; }
.finput { flex: 1; height: 20px; box-sizing: border-box; border: 1px solid #aaa; display: flex; justify-content: flex-end; align-items: center; color: #555; font-size: 11px; }
.finput.ro { background: #f0f0f0; }
.fval { padding-right: 2px; }
.finput.ro .fval { padding-right: 2px; }
.fval.caret { border-left: 1px solid #111; line-height: 14px; padding-right: 1px; }
.spin { width: 16px; height: 18px; background: #f0f0f0; border-left: 1px solid #e0e0e0; display: flex; flex-direction: column; justify-content: center; align-items: center; gap: 3px; }
.spin svg { width: 8px; height: 5px; }

.ctabs { height: 27px; margin-top: 10px; flex: none; display: flex; padding-left: 1px; position: relative; z-index: 1; }
.ctab { height: 25px; margin-top: 2px; box-sizing: border-box; border: 1px solid #aaa; background: #fff; display: flex; align-items: center; padding-left: 9px; gap: 2px; color: #444; font-size: 9.8px; }
.ctab span { padding-bottom: 1px; }
.ctab.on { height: 28px; margin-top: 0; border-bottom: 0; padding-bottom: 1px; }
.ctab .i18 { width: 17px; height: 17px; }
.ctab:nth-child(1) span { margin-left: 2px; }
.cpanel { height: 88px; flex: none; box-sizing: border-box; border: 1px solid #aaa; padding: 1px 2px 3px 2px; }
.cinner { height: 100%; box-sizing: border-box; border: 2px solid #808080; border-top-width: 1px; display: flex; flex-direction: column; }
.tbar { height: 29px; flex: none; display: flex; align-items: center; padding-left: 1px; box-sizing: border-box; border-bottom: 1px solid #aaa; }
.ti { width: 26px; height: 22px; flex: none; display: flex; align-items: center; justify-content: center; position: relative; }
.gapl { margin-left: 4px; }
.caretdn { display: block; width: 0; height: 0; border-left: 3px solid transparent; border-right: 3px solid transparent; border-top: 3px solid #444; }
.caretdn.sig { position: absolute; right: -2px; top: 10px; }
.arrowcell { width: 17px; flex: none; display: flex; justify-content: center; }
.arrowcell.nar { width: 8px; }
.combo { height: 21px; flex: none; box-sizing: border-box; border: 1px solid #aaa; display: flex; align-items: center; color: #444; font-size: 10.3px; }
.combo span { flex: 1; padding-left: 4px; }
.combo b { width: 16px; height: 19px; background: #e6e6e6; border-left: 1px solid #bbb; display: flex; align-items: center; justify-content: center; }
.combo svg { width: 9px; height: 6px; }
.combo.font { width: 128px; margin-left: 13px; }
.combo.size { width: 50px; margin-left: 8px; margin-right: 5px; }
.t-txt { font-family: "Liberation Serif", serif; font-weight: 700; color: #2f4e78; font-size: 14px; }
.t-txt.big { font-size: 17px; color: #1f5a99; }
.t-txt.med { font-size: 15px; color: #1f5a99; }
.t-txt sup { font-size: 8px; line-height: 8px; margin-right: -1px; align-self: flex-start; margin-top: 3px; color: #222; }
.t-txt.it { font-style: italic; color: #3b4c63; }
.t-txt.un { text-decoration: underline; }
.t-txt.un.dbl { text-decoration-style: double; }
.t-txt.fc { font-size: 16px; color: #1d4f88; font-weight: 400; box-shadow: inset 0 -3px 0 #000; height: 18px; width: 16px; margin: 0 5px; line-height: 15px; }
.t-txt.aa { font-size: 14px; color: #1f6ab0; width: 23px; }
.t-txt.bigA { font-size: 18px; color: #1d4f88; font-weight: 400; }
.tsep { width: 1px; height: 22px; background: #c4c4c4; flex: none; margin: 0 3px 0 2px; }
.tmore { width: 9px; height: 7px; margin-left: auto; margin-right: 1px; }
.editor { flex: 1; min-height: 0; display: flex; }
.etext { flex: 1; padding: 6px 0 0 15px; font-family: "DejaVu Sans", sans-serif; font-size: 10px; letter-spacing: .082px; line-height: 13px; color: #222; white-space: nowrap; overflow: hidden; }
.escroll { width: 16px; flex: none; background: #f0f0f0; display: flex; flex-direction: column; justify-content: space-between; align-items: center; padding: 5px 0; box-sizing: border-box; }
.escroll svg { width: 9px; height: 6px; }

.status { height: 24px; flex: none; background: #0072c6; position: relative; display: flex; justify-content: flex-end; align-items: flex-end; }
.grip { width: 9px; height: 9px; margin: 0 1px 2px 0; }
</style>
